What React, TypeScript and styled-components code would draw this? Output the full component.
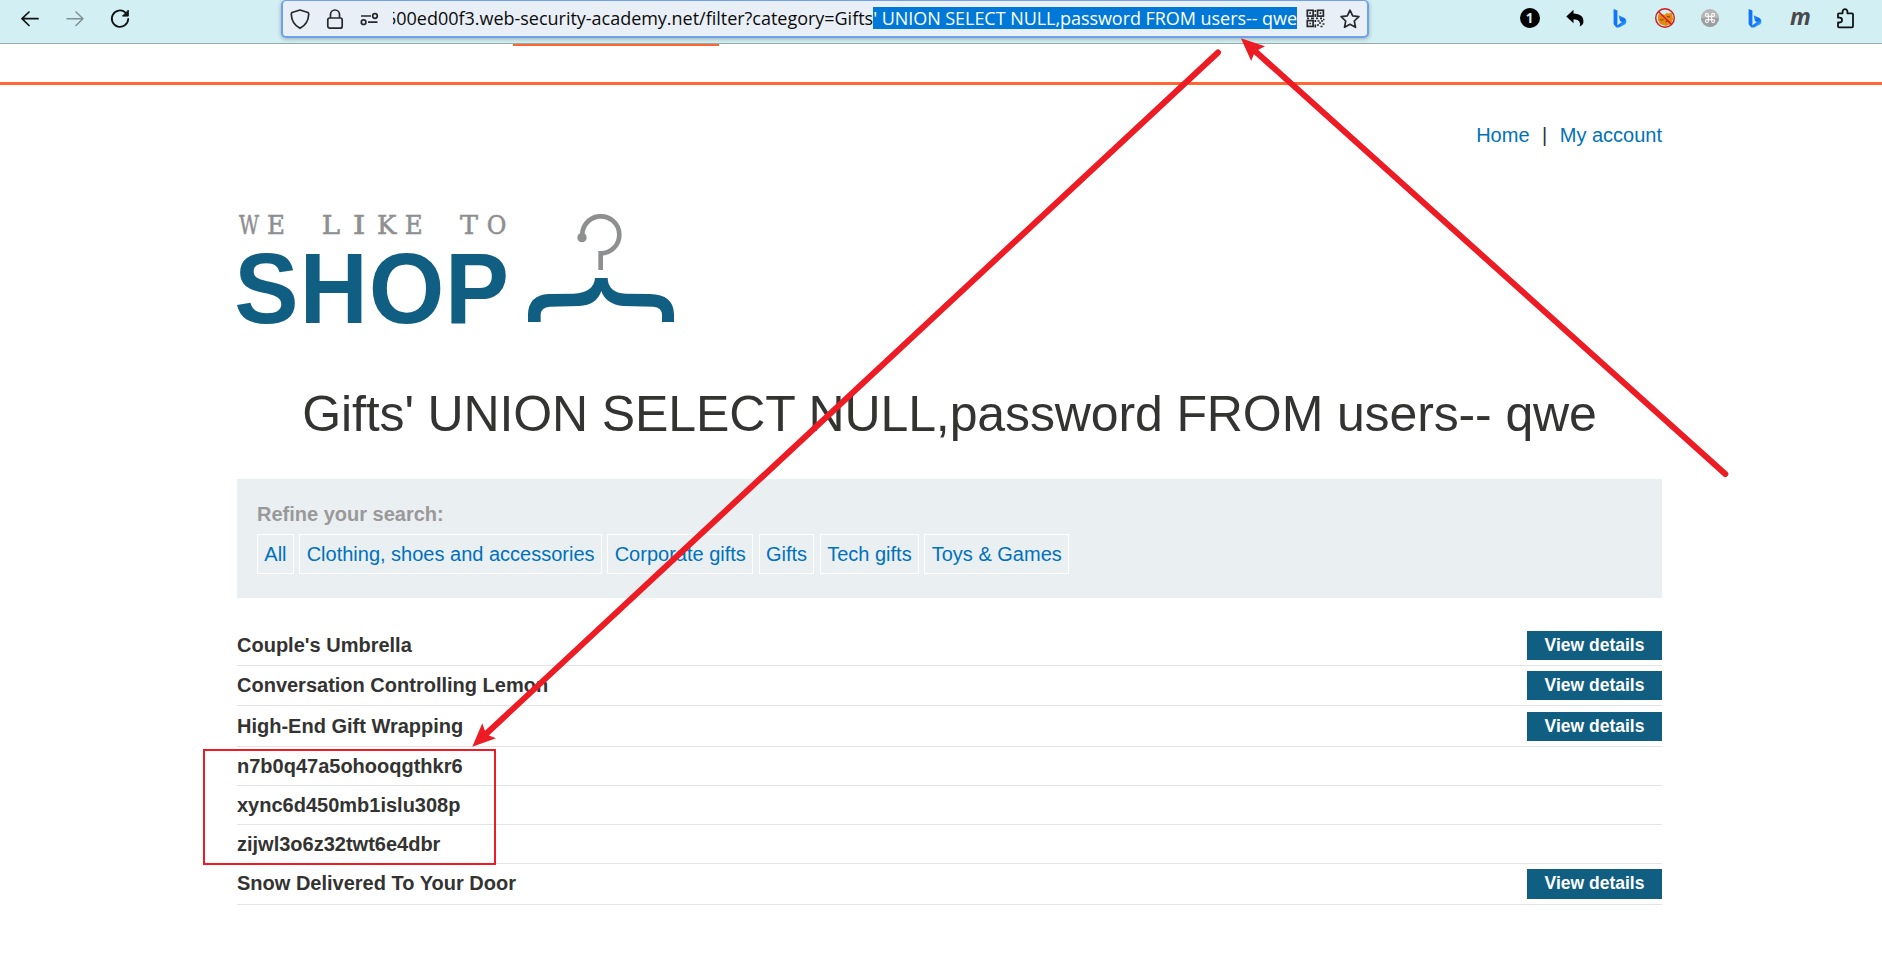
import React from "react";
import styled, { createGlobalStyle } from "styled-components";

const Global = createGlobalStyle`
  * { box-sizing: border-box; }
  body { margin: 0; background: #fff; overflow: hidden; }
`;

const Page = styled.div`
  position: relative;
  width: 1882px;
  height: 961px;
  overflow: hidden;
  color: #333332;
  font: 20px/25px "Liberation Sans", Arial, sans-serif;
`;

/* ---------- browser toolbar ---------- */

const Toolbar = styled.header`
  display: flex;
  align-items: flex-start;
  height: 44px;
  background: #d2eff3;
  border-bottom: 1px solid #98abae;
`;

const NavButtons = styled.div`
  display: flex;
  gap: 25px;
  width: 281px;
  padding: 8px 0 0 20px;
`;

const Icon = styled.svg`
  display: block;
  flex: none;
  overflow: visible;
`;

const AddressBar = styled.div`
  display: flex;
  align-items: center;
  width: 1088px;
  height: 38px;
  padding: 0 7px 0 6px;
  background: #e9eff6;
  border: 2px solid #6fa1ea;
  border-top-width: 1px;
  border-radius: 5px;
  box-shadow: 0 1px 4px rgba(0, 0, 0, 0.28);
`;

const BarIcons = styled.div`
  display: flex;
  gap: 14px;
  width: 104px;
`;

const Url = styled.div`
  display: flex;
  justify-content: flex-end;
  width: 904px;
  height: 22px;
  margin-top: -1px;
  overflow: hidden;
  color: #0c0c0d;
  font: 18px/22px "Open Sans", "Noto Sans", sans-serif;
  white-space: pre;
`;

const UrlPlain = styled.span`
  letter-spacing: -0.02px;
`;

const Selected = styled.span`
  background: #0078d7;
  color: #fff;
  letter-spacing: -0.05px;
`;

const BarActions = styled.div`
  display: flex;
  gap: 15px;
  margin-left: 9px;
`;

const Extensions = styled.div`
  display: flex;
  gap: 25px;
  margin-left: 151px;
  padding-top: 8px;
`;

const MGlyph = styled.span`
  width: 20px;
  color: #4a4a4c;
  font: italic bold 23px/17px "Open Sans", sans-serif;
  text-align: center;
`;

/* ---------- lab header ---------- */

const LabHeader = styled.div`
  height: 41px;
  border-bottom: 3px solid #ff6633;
`;

const LabAccent = styled.div`
  width: 206px;
  height: 2px;
  margin-left: 513px;
  background: #ff6633;
`;

/* ---------- shop page ---------- */

const Shop = styled.main`
  width: 1425px;
  margin-left: 237px;
`;

const TopLinks = styled.nav`
  display: flex;
  justify-content: flex-end;
  gap: 12.5px;
  padding-top: 38px;
`;

const Link = styled.a`
  color: #0071bc;
`;

const Logo = styled.svg`
  display: block;
  margin-top: 42px;
  overflow: visible;
`;

const Title = styled.h1`
  margin: 39px 0 0;
  height: 70px;
  font-size: 50px;
  font-weight: 400;
  line-height: 70px;
  letter-spacing: -0.12px;
  text-align: center;
  white-space: nowrap;
`;

const Filters = styled.section`
  height: 119px;
  margin-top: 30px;
  padding: 23px 20px 0;
  background: #eaeff2;
`;

const FilterLabel = styled.div`
  height: 32px;
  color: #999;
  font-weight: 700;
`;

const Chips = styled.div`
  display: flex;
  gap: 5.5px;
`;

const Chip = styled.a`
  height: 40px;
  padding: 0 6.3px;
  border: 1px solid #fff;
  color: #0071bc;
  line-height: 38px;
  white-space: nowrap;
`;

const List = styled.div`
  margin-top: 28px;
`;

const Row = styled.div<{ $h: number }>`
  display: flex;
  align-items: center;
  justify-content: space-between;
  height: ${(p) => p.$h}px;
  border-bottom: 1px solid #e4e4e4;
  font-weight: 700;
`;

const Name = styled.span<{ $raise?: number }>`
  padding-bottom: ${(p) => p.$raise ?? 0}px;
`;

const Button = styled.a<{ $h: number }>`
  width: 135px;
  height: ${(p) => p.$h}px;
  background: #115e83;
  color: #fff;
  font-size: 17.5px;
  line-height: 29px;
  text-align: center;
`;

/* ---------- annotations over the page ---------- */

const Marks = styled.svg`
  position: absolute;
  left: 0;
  top: 0;
`;

const categories = ["All", "Clothing, shoes and accessories", "Corporate gifts", "Gifts", "Tech gifts", "Toys & Games"];

const rows = [
  { name: "Couple's Umbrella", h: 40, button: 29 },
  { name: "Conversation Controlling Lemon", h: 40, button: 29 },
  { name: "High-End Gift Wrapping", h: 41, button: 29 },
  { name: "n7b0q47a5ohooqgthkr6", h: 39 },
  { name: "xync6d450mb1islu308p", h: 39 },
  { name: "zijwl3o6z32twt6e4dbr", h: 39 },
  { name: "Snow Delivered To Your Door", h: 41, button: 30, raise: 2 },
];

/* letter, left edge, drawn width */
type Glyph = [string, number, number];

const tagline: Glyph[] = [
  ["W", 57, 60], ["E", 141, 54], ["L", 305, 55], ["I", 398, 38],
  ["K", 471, 58], ["E", 554, 54], ["T", 720, 54], ["O", 800, 59],
];

const wordmark: Glyph[] = [
  ["S", 43, 193], ["H", 239, 204], ["O", 446, 227], ["P", 675, 192],
];

const Letters = ({ glyphs, y }: { glyphs: Glyph[]; y: number }) => (
  <text>
    {glyphs.map(([ch, x, w], i) => (
      <tspan key={i} x={x} y={y} textLength={w} lengthAdjust="spacingAndGlyphs">{ch}</tspan>
    ))}
  </text>
);

const Bing = () => (
  <Icon width="20" height="20" viewBox="0 0 20 20">
    <defs>
      <linearGradient id="bing" x1="0" y1="0" x2="0.8" y2="1">
        <stop offset="0" stopColor="#27b4ff" />
        <stop offset="0.55" stopColor="#1568f5" />
        <stop offset="1" stopColor="#29b9fb" />
      </linearGradient>
    </defs>
    <path d="M3.600 1 7.400 2.400v12.500l-.3 3.800C5 18.700 3.600 17 3.600 15.300z" fill="#1573fa" />
    <path d="M8.600 7.200 14.500 10q1.900 1.200 1.900 3.400 0 1.600-1.200 2.800l-5.500 3q-2.300 1-4.500-.5L12 14l-2-1z" fill="url(#bing)" />
  </Icon>
);

export default function App() {
  return (
    <Page>
      <Global />
      <Toolbar>
        <NavButtons>
          <Icon width="20" height="20" viewBox="0 0 20 20" fill="none" stroke="#101414" strokeWidth="1.7" strokeLinecap="round" strokeLinejoin="round">
            <path d="M18 10.700H2M9 4 2 10.700l7 6.800" />
          </Icon>
          <Icon width="20" height="20" viewBox="0 0 20 20" fill="none" stroke="#7f9193" strokeWidth="1.500" strokeLinecap="round" strokeLinejoin="round">
            <path d="M2 10.700h16M11 4l7 6.700-7 6.800" />
          </Icon>
          <Icon width="20" height="20" viewBox="0 0 20 20" fill="none" stroke="#101414" strokeWidth="1.800" strokeLinecap="round">
            <path d="M15.500 4.600A8.200 8.200 0 1 0 18.200 11" />
            <path d="M18.300 2.500v5.600h-5.500z" fill="#101414" strokeWidth="1" strokeLinejoin="round" />
          </Icon>
        </NavButtons>
        <AddressBar>
          <BarIcons>
            <Icon width="22" height="22" viewBox="0 0 22 22" fill="none" stroke="#26282c" strokeWidth="1.700" strokeLinejoin="round">
              <path d="M11 2 19 4.500Q19.800 5 19.700 6.500 19.300 16 11 20.300 2.700 16 2.300 6.500 2.200 5 3 4.500z" />
            </Icon>
            <Icon width="20" height="22" viewBox="0 0 20 22" fill="none" stroke="#26282c" strokeWidth="1.700">
              <rect x="2.800" y="10" width="14.400" height="10.200" rx="2" />
              <path d="M5.500 10V6.500a4.500 4.500 0 0 1 9 0V10" />
            </Icon>
            <Icon width="20" height="22" viewBox="0 0 20 22" fill="none" stroke="#26282c" strokeWidth="1.700">
              <path d="M2 8h10M9 14.200h9.500" />
              <circle cx="16" cy="8" r="2.300" />
              <circle cx="4.600" cy="14.200" r="2.300" />
            </Icon>
          </BarIcons>
          <Url>
            <UrlPlain>500ed00f3.web-security-academy.net/filter?category=Gifts</UrlPlain>
            <Selected>' UNION SELECT NULL,password FROM users-- qwe</Selected>
          </Url>
          <BarActions>
            <Icon width="19" height="19" viewBox="0 0 19 19" fill="none" stroke="#26282c" strokeWidth="1.700">
              <rect x="1.300" y="1.300" width="5.800" height="5.800" />
              <rect x="11.600" y="1.300" width="5.800" height="5.800" />
              <rect x="1.300" y="11.600" width="5.800" height="5.800" />
              <path d="M3.400 4.200H5M13.700 4.200h1.600M3.400 14.500H5M9.300 1v2M9.300 5v3M1 9.300h2M5 9.300h3M10 9.300h2M14 9.300h2M17 10.500h1.500M9.300 11v2M9.300 15.500v3M11.500 12h2M15 12h2M13 14h2M11 16h2M16.500 15h2M14.500 17.500h2" />
            </Icon>
            <Icon width="20" height="20" viewBox="0 0 20 20" fill="none" stroke="#26282c" strokeWidth="1.700" strokeLinejoin="round">
              <path d="m10 1.200 2.700 5.700 6.200.8-4.600 4.300 1.200 6.300L10 15.300l-5.500 3 1.200-6.300L1.100 7.700l6.200-.8z" />
            </Icon>
          </BarActions>
        </AddressBar>
        <Extensions>
          <Icon width="20" height="20" viewBox="0 0 20 20">
            <circle cx="10" cy="10" r="10" fill="#000" />
            <text x="9.700" y="14.800" fill="#d2eff3" textAnchor="middle" fontFamily="Open Sans" fontWeight="700" fontSize="13.500">1</text>
          </Icon>
          <Icon width="20" height="20" viewBox="0 0 20 20">
            <path d="M1.300 8.500 8.500 1.800V5.500C15 5.500 19.500 9 18.300 15Q17.300 18 14.600 18.600 16.800 11.500 8.500 11.200v4z" fill="#000" />
          </Icon>
          <Bing />
          <Icon width="20" height="20" viewBox="0 0 20 20">
            <path d="M3 8 4 5.500l2 1.500q2-1 4-.3l1.500-2L13 5.500l4-.5 1 6-2 5-5 2-6-2-2-4z" fill="#e8860f" />
            <path d="M5 11.500q2 1.500 3.500 0M10.500 14q2-2 4-.5M12 8.500l3 .5" stroke="#6b4316" fill="none" />
            <circle cx="10" cy="10" r="9.300" fill="none" stroke="#d3161b" strokeWidth="1.400" />
            <path d="m3.500 3.500 13 13" stroke="#d3161b" strokeWidth="1.400" />
          </Icon>
          <Icon width="20" height="20" viewBox="0 0 20 20">
            <circle cx="10" cy="10" r="9" fill="#b5b5b5" />
            <path d="M1 10a9 9 0 0 0 18 0z" fill="#9d9d9d" />
            <path d="M8.400 8.400H6.900a1.500 1.500 0 1 1 1.500-1.500v6.200a1.500 1.500 0 1 1-1.500-1.500h6.200a1.500 1.500 0 1 1-1.500 1.500V6.900a1.500 1.500 0 1 1 1.500 1.500z" fill="none" stroke="#f5f5f5" strokeWidth="1.200" />
          </Icon>
          <Bing />
          <MGlyph>m</MGlyph>
          <Icon width="20" height="20" viewBox="0 0 20 20" fill="none" stroke="#101414" strokeWidth="1.800" strokeLinejoin="round">
            <path d="M3 9V6.300q0-1 1-1h3.600V3.600a2.400 2.400 0 0 1 4.800 0v1.700H17q1 0 1 1v12q0 1-1 1H4q-1 0-1-1v-3.800h1.600a2.400 2.400 0 0 0 0-4.800H3z" />
          </Icon>
        </Extensions>
      </Toolbar>

      <LabHeader>
        <LabAccent />
      </LabHeader>

      <Shop>
        <TopLinks>
          <Link>Home</Link>
          <span>|</span>
          <Link>My account</Link>
        </TopLinks>
        <Logo width="463" height="150" viewBox="51 0 1389 450">
          <g fill="#8e8f90" stroke="#8e8f90" strokeWidth="1.600" fontFamily="DejaVu Serif" fontSize="77">
            <Letters glyphs={tagline} y={131} />
          </g>
          <g fill="#115e83" fontFamily="Liberation Sans" fontWeight="700" fontSize="303">
            <Letters glyphs={wordmark} y={398} />
          </g>
          <path d="M1087.500 143A55.500 55.500 0 1 1 1142 190V240" fill="none" stroke="#8e8f90" strokeWidth="14" />
          <circle cx="1086" cy="143" r="14" fill="#8e8f90" />
          <path d="M1125 264H1163C1163 292 1182 310 1217 311L1290 312Q1361 314 1362 372V396H1326V375Q1326 352 1300 350L1210 348Q1157 343 1144 303 1130 345 1078 348L990 350Q963 352 962 374V396H924V372Q926 316 985 312L1060 311Q1122 308 1125 264Z" fill="#115e83" />
        </Logo>
        <Title>Gifts' UNION SELECT NULL,password FROM users-- qwe</Title>
        <Filters>
          <FilterLabel>Refine your search:</FilterLabel>
          <Chips>
            {categories.map((c) => (
              <Chip key={c}>{c}</Chip>
            ))}
          </Chips>
        </Filters>
        <List>
          {rows.map((r) => (
            <Row key={r.name} $h={r.h}>
              <Name $raise={r.raise}>{r.name}</Name>
              {r.button && <Button $h={r.button}>View details</Button>}
            </Row>
          ))}
        </List>
      </Shop>

      <Marks width="1882" height="961" fill="#ed1c24" stroke="#ed1c24">
        <rect x="204" y="750" width="291" height="114" fill="none" strokeWidth="2" />
        <path d="M1218 52.500 486 734M1725.300 474 1256 52" fill="none" strokeWidth="6" strokeLinecap="round" />
        <path d="M472.300 746.700 482.300 723.300 485 731 489 735.500 496 738.300Z" stroke="none" />
        <path d="M1240.900 38.300 1265 46.300 1258 50 1254 54 1251.200 61Z" stroke="none" />
      </Marks>
    </Page>
  );
}
